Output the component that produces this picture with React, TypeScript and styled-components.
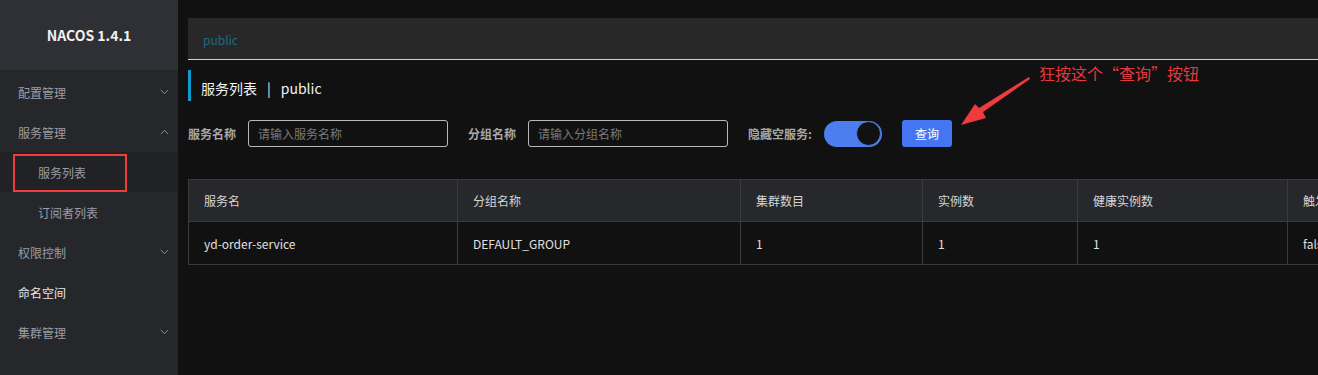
import React from 'react'
import styled, { createGlobalStyle } from 'styled-components'

const GlobalStyle = createGlobalStyle`
  html, body {
    margin: 0;
    padding: 0;
    background: #111111;
    font-family: "Noto Sans CJK SC", "Noto Sans", sans-serif;
  }
  * { box-sizing: border-box; }
`

const Page = styled.div`
  display: flex;
  width: 1318px;
  height: 375px;
  overflow: hidden;
  background: #111111;
  position: relative;
`

const Sidebar = styled.aside`
  width: 178px;
  flex-shrink: 0;
  background: #26272b;
  display: flex;
  flex-direction: column;
`

const Logo = styled.div`
  height: 70px;
  background: #2e3035;
  color: #f2f2f2;
  font-weight: 700;
  font-size: 14px;
  display: flex;
  align-items: center;
  justify-content: center;
`

const Menu = styled.ul`
  list-style: none;
  margin: 0;
  padding: 2px 0 0;
`

const MenuItem = styled.li<{ $bright?: boolean; $sub?: boolean; $active?: boolean }>`
  height: 40px;
  display: flex;
  align-items: center;
  justify-content: space-between;
  padding: 0 9px 0 ${({ $sub }) => ($sub ? '38px' : '18px')};
  font-size: 12px;
  color: ${({ $bright }) => ($bright ? '#e6e6e6' : '#9b9ea4')};
  background: ${({ $active }) => ($active ? '#212226' : 'transparent')};
  position: relative;
`

const Highlight = styled.span`
  position: absolute;
  left: 13px;
  top: 2px;
  width: 114px;
  height: 38px;
  border: 2px solid #f43a3a;
`

const Chevron = ({ up }: { up?: boolean }) => (
  <svg width="9" height="6" viewBox="0 0 9 6" fill="none">
    <path
      d={up ? 'M0.8 5.2 L4.5 1.2 L8.2 5.2' : 'M0.8 0.8 L4.5 4.8 L8.2 0.8'}
      stroke="#8a8d93"
      strokeWidth="1"
    />
  </svg>
)

const Main = styled.main`
  flex: 1;
  padding: 18px 0 0 10px;
  overflow: hidden;
`

const TopBar = styled.div`
  height: 42px;
  background: #282828;
  border-bottom: 1px solid #cfcfcf;
  display: flex;
  align-items: center;
  padding: 2px 0 0 15px;
  font-size: 12px;
  color: #1b6a87;
`

const Title = styled.div`
  margin-top: 10px;
  height: 31px;
  border-left: 3px solid #0c9ad0;
  padding: 4px 0 0 10px;
  display: flex;
  align-items: center;
  font-size: 14px;
  color: #f2f2f2;
  gap: 10px;
`

const FormRow = styled.div`
  margin-top: 19px;
  display: flex;
  align-items: center;
  height: 27px;
`

const Label = styled.label`
  font-size: 12px;
  font-weight: 700;
  color: #a8a8a8;
  margin-right: 12px;
`

const Input = styled.div`
  width: 200px;
  height: 27px;
  border: 1px solid #b8b8b8;
  border-radius: 3px;
  padding-left: 9px;
  display: flex;
  align-items: center;
  font-size: 12px;
  color: #7a7a7a;
  margin-right: 20px;
`

const Switch = styled.div`
  width: 58px;
  height: 26px;
  border-radius: 13px;
  background: #4d7ef0;
  display: flex;
  justify-content: flex-end;
  align-items: center;
  padding-right: 1px;
  margin-right: 20px;
`

const Knob = styled.span`
  width: 25px;
  height: 25px;
  border-radius: 50%;
  background: #111;
  border: 1px solid #4d7ef0;
`

const Button = styled.button`
  width: 50px;
  height: 27px;
  border: none;
  border-radius: 3px;
  background: #4476f3;
  color: #ffffff;
  font-family: inherit;
  font-size: 12px;
  padding: 0;
`

const Table = styled.table`
  margin-top: 32px;
  border-collapse: collapse;
  width: 1260px;
  table-layout: fixed;
  font-size: 12px;
`

const Th = styled.th`
  height: 42px;
  background: #27282c;
  border: 1px solid #3a3b3f;
  color: #d6d6d6;
  font-weight: 400;
  text-align: left;
  padding-left: 15px;
`

const Td = styled.td`
  height: 43px;
  background: #111111;
  border: 1px solid #3a3b3f;
  color: #e0e0e0;
  text-align: left;
  padding-left: 15px;
  white-space: nowrap;
  overflow: hidden;
`

const Note = styled.div`
  position: absolute;
  left: 1039px;
  top: 61px;
  font-size: 16px;
  color: #e8383d;
`

const Arrow = styled.svg`
  position: absolute;
  left: 955px;
  top: 74px;
`

const columns = [
  { title: '服务名', width: 269 },
  { title: '分组名称', width: 283 },
  { title: '集群数目', width: 182 },
  { title: '实例数', width: 155 },
  { title: '健康实例数', width: 210 },
  { title: '触发保护阈值', width: 161 },
]

const row = ['yd-order-service', 'DEFAULT_GROUP', '1', '1', '1', 'false']

export default function App() {
  return (
    <Page>
      <GlobalStyle />
      <Sidebar>
        <Logo>NACOS 1.4.1</Logo>
        <Menu>
          <MenuItem>
            配置管理
            <Chevron />
          </MenuItem>
          <MenuItem>
            服务管理
            <Chevron up />
          </MenuItem>
          <MenuItem $sub $active>
            <Highlight />
            服务列表
          </MenuItem>
          <MenuItem $sub>订阅者列表</MenuItem>
          <MenuItem>
            权限控制
            <Chevron />
          </MenuItem>
          <MenuItem $bright>命名空间</MenuItem>
          <MenuItem>
            集群管理
            <Chevron />
          </MenuItem>
        </Menu>
      </Sidebar>
      <Main>
        <TopBar>public</TopBar>
        <Title>
          <span>服务列表</span>
          <span>|</span>
          <span>public</span>
        </Title>
        <FormRow>
          <Label>服务名称</Label>
          <Input>请输入服务名称</Input>
          <Label>分组名称</Label>
          <Input>请输入分组名称</Input>
          <Label>隐藏空服务:</Label>
          <Switch>
            <Knob />
          </Switch>
          <Button>查询</Button>
        </FormRow>
        <Table>
          <colgroup>
            {columns.map((c) => (
              <col key={c.title} style={{ width: c.width }} />
            ))}
          </colgroup>
          <thead>
            <tr>
              {columns.map((c) => (
                <Th key={c.title}>{c.title}</Th>
              ))}
            </tr>
          </thead>
          <tbody>
            <tr>
              {row.map((v, i) => (
                <Td key={i}>{v}</Td>
              ))}
            </tr>
          </tbody>
        </Table>
      </Main>
      <Note>狂按这个“查询”按钮</Note>
      <Arrow width="80" height="56" viewBox="0 0 80 56">
        <path d="M74 3 L75 5 L28 38 L31 44 L6 51 L20 30 L24 34 Z" fill="#ef3a3f" />
      </Arrow>
    </Page>
  )
}
